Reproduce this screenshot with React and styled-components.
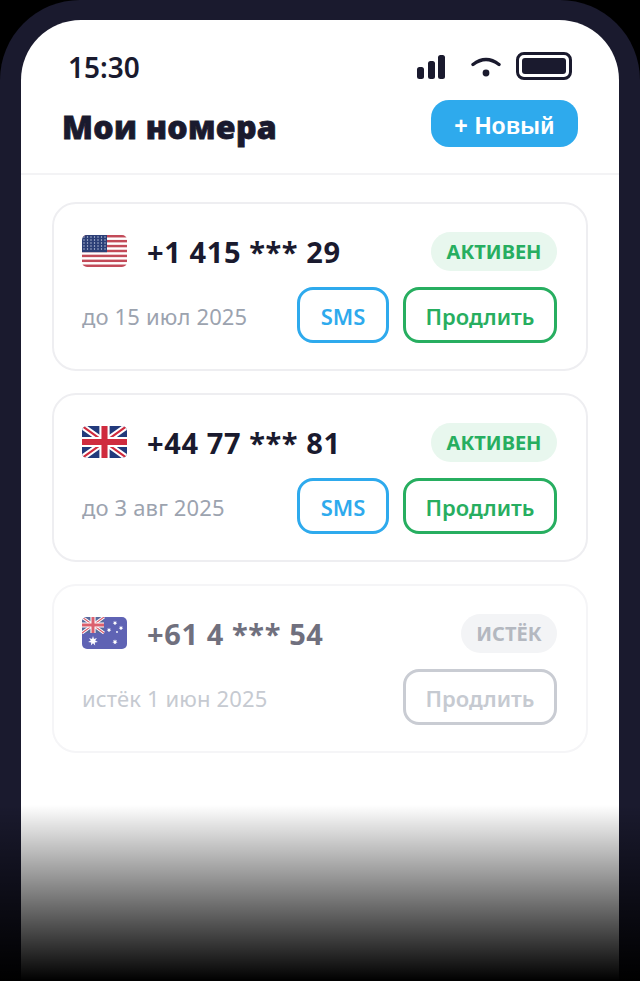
import React from "react";
import styled, { createGlobalStyle } from "styled-components";

const GlobalStyle = createGlobalStyle`
  html, body {
    margin: 0;
    padding: 0;
    background: #000;
  }
  * {
    box-sizing: border-box;
  }
`;

const Page = styled.div`
  position: relative;
  width: 640px;
  height: 981px;
  overflow: hidden;
  background: #000;
  font-family: "Noto Sans", sans-serif;
`;

const Phone = styled.div`
  height: 100%;
  padding: 20px 21px 0;
  background: #1a1a2e;
  border-radius: 80px 80px 0 0;
`;

const Screen = styled.div`
  height: 100%;
  background: #fff;
  border-radius: 60px 60px 0 0;
  overflow: hidden;
`;

const StatusBar = styled.div`
  display: flex;
  justify-content: space-between;
  align-items: center;
  height: 34px;
  margin-top: 30px;
  padding: 0 47px;
  color: #1a1a2e;
  font-size: 28px;
  font-weight: 600;
  line-height: 34px;
`;

const StatusIcons = styled.div`
  display: flex;
  align-items: center;
`;

const Battery = styled.div`
  width: 56px;
  height: 28px;
  margin: 0 0 2px 14px;
  padding: 3px;
  border: 3px solid #1a1a2e;
  border-radius: 8px;
  &::after {
    content: "";
    display: block;
    height: 100%;
    background: #1a1a2e;
    border-radius: 3px;
  }
`;

const Header = styled.div`
  display: flex;
  justify-content: space-between;
  align-items: flex-start;
  height: 91px;
  padding: 0 41px;
  border-bottom: 2px solid #f3f3f5;
`;

const Title = styled.h1`
  margin: 21px 0 0;
  color: #1a1a2e;
  font-family: "Open Sans", sans-serif;
  font-size: 32px;
  font-weight: 800;
  line-height: 44px;
  letter-spacing: 0.3px;
  -webkit-text-stroke: 0.8px #1a1a2e;
`;

const NewButton = styled.button`
  width: 147px;
  height: 47px;
  margin-top: 16px;
  padding: 6px 0 0;
  border: 0;
  border-radius: 18px;
  background: #2eaaed;
  color: #fff;
  font-family: "Liberation Sans", sans-serif;
  font-size: 23px;
  font-weight: 700;
  letter-spacing: 0.3px;
`;

const List = styled.div`
  display: flex;
  flex-direction: column;
  gap: 22px;
  padding: 27px 31px 0;
`;

const Card = styled.div`
  display: flex;
  flex-direction: column;
  gap: 9px;
  height: 169px;
  padding: 20px 29px 0 28px;
  border: 2px solid ${(p) => (p.$muted ? "#f5f5f7" : "#eeeef1")};
  border-radius: 24px;
`;

const Row = styled.div`
  display: flex;
  justify-content: space-between;
  align-items: center;
`;

const Number = styled.div`
  display: flex;
  align-items: center;
  gap: 20px;
  height: 54px;
  color: ${(p) => (p.$muted ? "#70707e" : "#1a1a2e")};
  font-size: 29px;
  font-weight: 700;
  letter-spacing: 0.6px;
`;

const FlagBox = styled.svg`
  display: block;
  width: 45px;
  height: 32px;
  flex: none;
  opacity: ${(p) => (p.$muted ? 0.75 : 1)};
`;

const Badge = styled.span`
  height: 39px;
  padding: 0 15.5px;
  border-radius: 20px;
  background: ${(p) => (p.$muted ? "#f3f4f6" : "#e8f7ee")};
  color: ${(p) => (p.$muted ? "#b4b8c0" : "#27ae60")};
  font-size: 20px;
  font-weight: 700;
  line-height: 40px;
`;

const Expiry = styled.span`
  padding-top: 2px;
  color: ${(p) => (p.$muted ? "#c6cad1" : "#9ca3af")};
  font-size: 22px;
  letter-spacing: 0.15px;
`;

const Actions = styled.div`
  display: flex;
  gap: 14px;
`;

const ActionButton = styled.button`
  width: ${(p) => p.$width}px;
  height: 56px;
  padding: 2px 0 0;
  border: 3px solid ${(p) => p.$color};
  border-radius: 16px;
  background: #fff;
  color: ${(p) => p.$text || p.$color};
  font-family: "Noto Sans", sans-serif;
  font-size: 22px;
  font-weight: 560;
`;

const Fade = styled.div`
  position: absolute;
  left: 0;
  right: 0;
  bottom: 0;
  height: 176px;
  background: linear-gradient(to bottom, rgba(0, 0, 0, 0), #000);
  pointer-events: none;
`;

const SignalIcon = () => (
  <svg width="30" height="26" viewBox="0 0 30 26">
    <rect x="1" y="13" width="7" height="12" rx="2.5" fill="#1a1a2e" />
    <rect x="12" y="7" width="7" height="18" rx="2.5" fill="#1a1a2e" />
    <rect x="22" y="1" width="7" height="24" rx="2.5" fill="#1a1a2e" />
  </svg>
);

const WifiIcon = () => (
  <svg width="32" height="24" viewBox="0 0 32 24" style={{ marginLeft: 24 }}>
    <path d="M3 9.5 Q16 -0.5 29 9.5" fill="none" stroke="#1a1a2e" strokeWidth="3.4" strokeLinecap="round" />
    <circle cx="16" cy="18" r="3.4" fill="#1a1a2e" />
  </svg>
);

const UsFlag = () => {
  const stripes = [0, 1, 2, 3, 4, 5, 6];
  return (
    <FlagBox viewBox="0 0 45 32">
      <defs>
        <clipPath id="us">
          <rect width="45" height="32" rx="5" />
        </clipPath>
      </defs>
      <g clipPath="url(#us)">
        <rect width="45" height="32" fill="#fff" />
        {stripes.map((i) => (
          <rect key={i} y={i * 4.92} width="45" height="2.46" fill="#c24a58" />
        ))}
        <rect width="25" height="17.2" fill="#2c3f77" />
        {[2, 5, 8, 11, 14].map((y) =>
          [2, 5.5, 9, 12.5, 16, 19.5, 23].map((x) => (
            <circle key={`${x}-${y}`} cx={x} cy={y} r="0.7" fill="#c8d0e4" />
          ))
        )}
      </g>
    </FlagBox>
  );
};

const UnionJack = ({ w, h }) => (
  <>
    <rect width={w} height={h} fill="#223a7c" />
    <path d={`M0 0L${w} ${h}M${w} 0L0 ${h}`} stroke="#fff" strokeWidth={h * 0.19} />
    <path d={`M0 0L${w} ${h}M${w} 0L0 ${h}`} stroke="#cf2b3e" strokeWidth={h * 0.07} />
    <path d={`M${w / 2} 0V${h}M0 ${h / 2}H${w}`} stroke="#fff" strokeWidth={h * 0.32} />
    <path d={`M${w / 2} 0V${h}M0 ${h / 2}H${w}`} stroke="#cf2b3e" strokeWidth={h * 0.19} />
  </>
);

const UkFlag = () => (
  <FlagBox viewBox="0 0 45 32">
    <defs>
      <clipPath id="uk">
        <rect width="45" height="32" rx="5" />
      </clipPath>
    </defs>
    <g clipPath="url(#uk)">
      <UnionJack w={45} h={32} />
    </g>
  </FlagBox>
);

// seven-point star for the Australian flag
const starPoints = (cx, cy, r) => {
  const pts = [];
  for (let i = 0; i < 14; i++) {
    const rad = i % 2 ? r * 0.45 : r;
    const a = (Math.PI * i) / 7 - Math.PI / 2;
    pts.push(`${cx + rad * Math.cos(a)},${cy + rad * Math.sin(a)}`);
  }
  return pts.join(" ");
};

const AuFlag = () => (
  <FlagBox viewBox="0 0 45 32" $muted>
    <defs>
      <clipPath id="au">
        <rect width="45" height="32" rx="5" />
      </clipPath>
    </defs>
    <g clipPath="url(#au)">
      <rect width="45" height="32" fill="#2a2f9c" />
      <UnionJack w={22} h={16} />
      <polygon points={starPoints(11, 24, 5)} fill="#fff" />
      <polygon points={starPoints(33, 6, 2.4)} fill="#fff" />
      <polygon points={starPoints(27, 13, 2.4)} fill="#fff" />
      <polygon points={starPoints(39, 11, 2.4)} fill="#fff" />
      <polygon points={starPoints(33, 25, 2.8)} fill="#fff" />
      <circle cx="35" cy="15" r="0.9" fill="#fff" />
    </g>
  </FlagBox>
);

const App = () => {
  return (
    <Page>
      <GlobalStyle />
      <Phone>
        <Screen>
          <StatusBar>
            <span>15:30</span>
            <StatusIcons>
              <SignalIcon />
              <WifiIcon />
              <Battery />
            </StatusIcons>
          </StatusBar>
          <Header>
            <Title>Мои номера</Title>
            <NewButton>+ Новый</NewButton>
          </Header>
          <List>
            <Card>
              <Row>
                <Number>
                  <UsFlag />
                  +1 415 *** 29
                </Number>
                <Badge>АКТИВЕН</Badge>
              </Row>
              <Row>
                <Expiry>до 15 июл 2025</Expiry>
                <Actions>
                  <ActionButton $width={92} $color="#2eaaed">SMS</ActionButton>
                  <ActionButton $width={154} $color="#27ae60">Продлить</ActionButton>
                </Actions>
              </Row>
            </Card>
            <Card>
              <Row>
                <Number>
                  <UkFlag />
                  +44 77 *** 81
                </Number>
                <Badge>АКТИВЕН</Badge>
              </Row>
              <Row>
                <Expiry>до 3 авг 2025</Expiry>
                <Actions>
                  <ActionButton $width={92} $color="#2eaaed">SMS</ActionButton>
                  <ActionButton $width={154} $color="#27ae60">Продлить</ActionButton>
                </Actions>
              </Row>
            </Card>
            <Card $muted>
              <Row>
                <Number $muted>
                  <AuFlag />
                  +61 4 *** 54
                </Number>
                <Badge $muted>ИСТЁК</Badge>
              </Row>
              <Row>
                <Expiry $muted>истёк 1 июн 2025</Expiry>
                <Actions>
                  <ActionButton $width={154} $color="#c9ccd3" $text="#c6cad1">Продлить</ActionButton>
                </Actions>
              </Row>
            </Card>
          </List>
        </Screen>
      </Phone>
      <Fade />
    </Page>
  );
};

export default App;
